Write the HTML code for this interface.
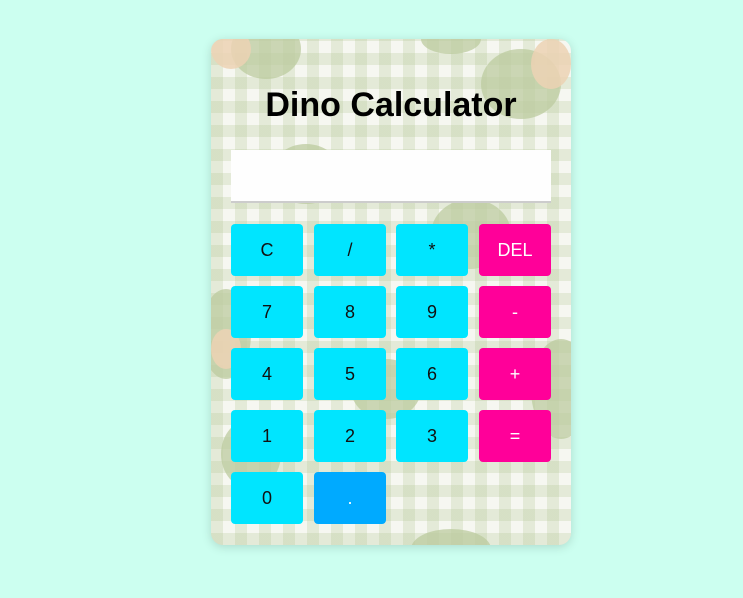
<!DOCTYPE html>
<html><head><meta charset="utf-8"><style>
*{margin:0;padding:0;box-sizing:border-box}
body{width:743px;height:598px;background:#ccfff0;position:relative;overflow:hidden;font-family:"Liberation Sans",sans-serif}
.card{position:absolute;left:211px;top:39px;width:360px;height:506px;border-radius:12px;overflow:hidden;
background-color:#f6f7f1;
background-image:
repeating-linear-gradient(90deg,rgba(180,200,150,.28) 0 12px,transparent 12px 24px),
repeating-linear-gradient(0deg,rgba(180,200,150,.28) 0 12px,transparent 12px 24px);
box-shadow:0 2px 10px rgba(0,0,0,.15)}
.blob{position:absolute;border-radius:50%;background:#bccb9f;opacity:.75}
.face{position:absolute;border-radius:50%;background:#ecd2b4;opacity:.85}
h1{position:absolute;left:0;width:360px;top:47px;text-align:center;font-size:34px;font-weight:bold;color:#000;letter-spacing:0}
.disp{position:absolute;left:20px;top:111px;width:320px;height:53px;background:#fefefe;border-bottom:2px solid #ccc}
.b{position:absolute;width:72px;height:52px;border-radius:4px;background:#00e5ff;color:#111;font-size:18px;display:flex;align-items:center;justify-content:center}
.p{background:#ff0099;color:#fff}
.d{background:#00aaff;color:#fff}
</style></head><body>
<div class="card">
<div class="blob" style="left:20px;top:-20px;width:70px;height:60px"></div>
<div class="face" style="left:0;top:-10px;width:40px;height:40px"></div>
<div class="blob" style="left:270px;top:10px;width:80px;height:70px"></div>
<div class="face" style="left:320px;top:0;width:40px;height:50px"></div>
<div class="blob" style="left:210px;top:-15px;width:60px;height:30px"></div>
<div class="blob" style="left:60px;top:105px;width:70px;height:60px"></div>
<div class="blob" style="left:220px;top:160px;width:80px;height:70px"></div>
<div class="blob" style="left:-10px;top:250px;width:50px;height:90px"></div>
<div class="face" style="left:0;top:290px;width:30px;height:40px"></div>
<div class="blob" style="left:320px;top:300px;width:60px;height:100px"></div>
<div class="blob" style="left:140px;top:320px;width:70px;height:60px"></div>
<div class="blob" style="left:10px;top:380px;width:60px;height:70px"></div>
<div class="blob" style="left:200px;top:490px;width:80px;height:40px"></div>
<h1>Dino Calculator</h1>
<div class="disp"></div>
</div>
<div class="b" style="left:231px;top:224px">C</div>
<div class="b" style="left:314px;top:224px">/</div>
<div class="b" style="left:396px;top:224px">*</div>
<div class="b p" style="left:479px;top:224px">DEL</div>
<div class="b" style="left:231px;top:286px">7</div>
<div class="b" style="left:314px;top:286px">8</div>
<div class="b" style="left:396px;top:286px">9</div>
<div class="b p" style="left:479px;top:286px">-</div>
<div class="b" style="left:231px;top:348px">4</div>
<div class="b" style="left:314px;top:348px">5</div>
<div class="b" style="left:396px;top:348px">6</div>
<div class="b p" style="left:479px;top:348px">+</div>
<div class="b" style="left:231px;top:410px">1</div>
<div class="b" style="left:314px;top:410px">2</div>
<div class="b" style="left:396px;top:410px">3</div>
<div class="b p" style="left:479px;top:410px">=</div>
<div class="b" style="left:231px;top:472px">0</div>
<div class="b d" style="left:314px;top:472px">.</div>
</body></html>
